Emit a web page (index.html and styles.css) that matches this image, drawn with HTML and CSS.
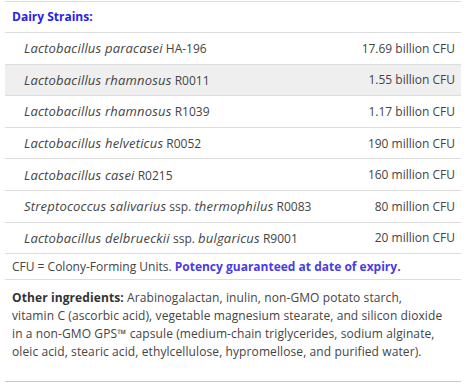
FILE: index.html
```html
<!DOCTYPE html>
<html>
<head>
<meta charset="utf-8">
<link rel="stylesheet" href="styles.css">
</head>
<body>
<div class="panel">
  <div class="heading">Dairy Strains:</div>
  <div class="row"><span class="name"><i>Lactobacillus paracasei</i> HA-196</span><span class="val">17.69 billion CFU</span></div>
  <div class="row alt"><span class="name"><i>Lactobacillus rhamnosus</i> R0011</span><span class="val">1.55 billion CFU</span></div>
  <div class="row"><span class="name"><i>Lactobacillus rhamnosus</i> R1039</span><span class="val">1.17 billion CFU</span></div>
  <div class="row"><span class="name"><i>Lactobacillus helveticus</i> R0052</span><span class="val">190 million CFU</span></div>
  <div class="row"><span class="name"><i>Lactobacillus casei</i> R0215</span><span class="val">160 million CFU</span></div>
  <div class="row"><span class="name"><i>Streptococcus salivarius</i> ssp. <i>thermophilus</i> R0083</span><span class="val">80 million CFU</span></div>
  <div class="row"><span class="name"><i>Lactobacillus delbrueckii</i> ssp. <i>bulgaricus</i> R9001</span><span class="val">20 million CFU</span></div>
  <div class="note">CFU = Colony-Forming Units. <b class="potency">Potency guaranteed at date of expiry.</b></div>
  <div class="other"><b>Other ingredients:</b> Arabinogalactan, inulin, non-GMO potato starch,<br>vitamin C (ascorbic acid), vegetable magnesium stearate, and silicon dioxide<br>in a non-GMO GPS™ capsule (medium-chain triglycerides, sodium alginate,<br>oleic acid, stearic acid, ethylcellulose, hypromellose, and purified water).</div>
</div>
</body>
</html>
```
FILE: styles.css
```css
html, body {
  margin: 0;
  padding: 0;
  background: #fff;
}
body {
  font-family: "Open Sans", "Noto Sans", sans-serif;
  font-size: 12px;
  color: #444;
}
.panel {
  margin: 1px 6px 0 5px;
  border-top: 1px solid #ddd;
  border-bottom: 1px solid #c8c8c8;
}
.heading {
  height: 30px;
  line-height: 30px;
  padding-left: 7px;
  font-weight: bold;
  color: #2a22e8;
  border-bottom: 1px solid #ddd;
}
.row {
  display: flex;
  justify-content: space-between;
  align-items: center;
  height: 30.6px;
  padding: 0 6px 0 19px;
  border-bottom: 1px solid #ddd;
}
.row i {
  font-size: 13px;
  letter-spacing: 0.2px;
}
.row.alt {
  background: #efefef;
}
.note {
  height: 25px;
  line-height: 25px;
  padding-left: 7px;
  border-bottom: 1px solid #ddd;
}
.potency {
  color: #4a3be6;
}
.other {
  padding: 9px 6px 20px 7px;
  line-height: 18px;
  letter-spacing: 0.1px;
  white-space: nowrap;
}
.other b {
  color: #333;
}
```
